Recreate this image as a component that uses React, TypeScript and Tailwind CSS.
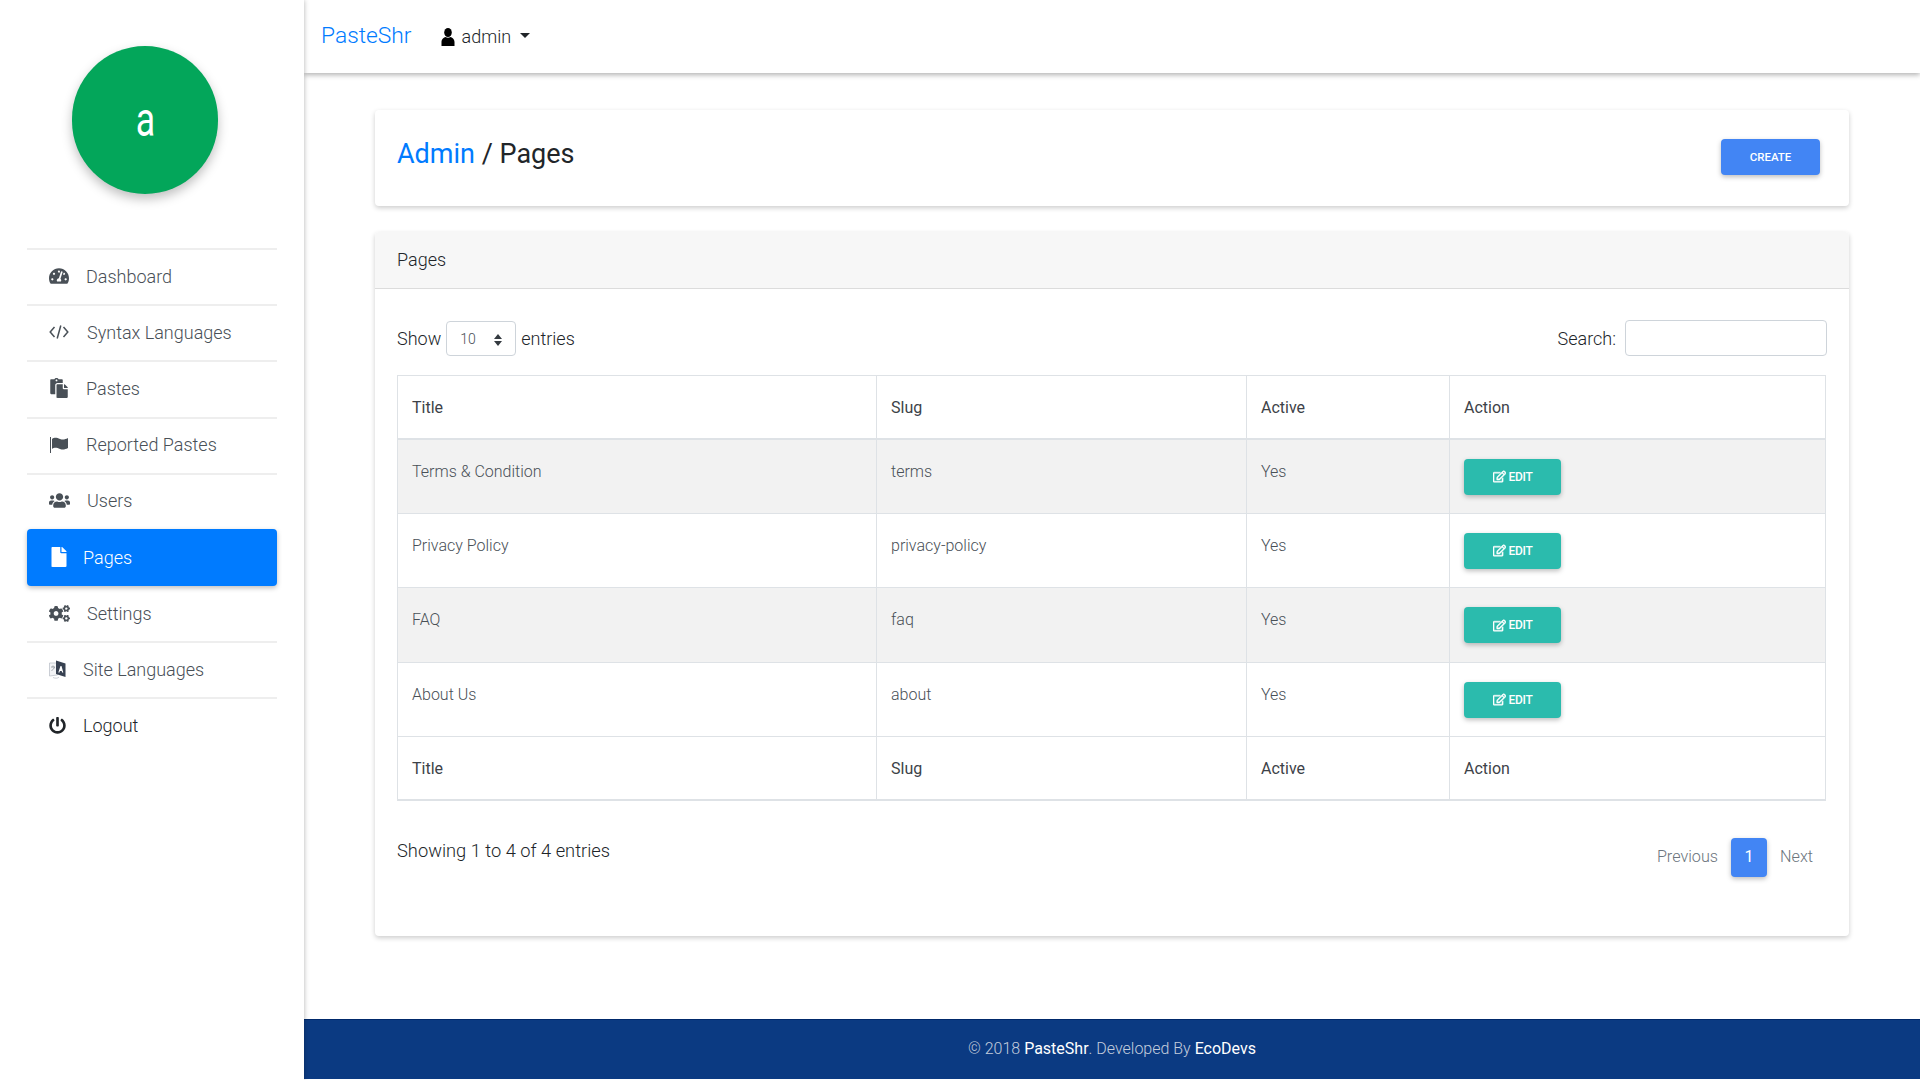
import { FaTachometerAlt, FaPaste, FaUsers, FaFile, FaCogs, FaPowerOff, FaUser, FaRegEdit } from "react-icons/fa";

function CodeIcon() {
  return (
    <svg width="20" height="16" viewBox="0 0 20 16" fill="none" stroke="#495057" strokeWidth="1.5">
      <path d="M5.5 3L1.2 8l4.3 5M14.5 3l4.3 5-4.3 5M11.8 1.5L8.2 14.5" />
    </svg>
  );
}

function FlagIcon() {
  return (
    <svg width="20" height="16" viewBox="0 0 20 16">
      <path d="M1 0h1v16H1z" fill="#495057" />
      <path d="M3 2c3-2 5-1 8 0s5 .5 8-1v10c-3 1.5-5 2-8 1s-5-2-8 0z" fill="#495057" />
    </svg>
  );
}

const nav = [
  { label: "Dashboard", icon: <FaTachometerAlt className="text-[20px]" />, gap: "w-[37px]" },
  { label: "Syntax Languages", icon: <CodeIcon />, gap: "w-[38px]" },
  { label: "Pastes", icon: <FaPaste className="text-[20px]" />, gap: "w-[37px]" },
  { label: "Reported Pastes", icon: <FlagIcon />, gap: "w-[37px]" },
  { label: "Users", icon: <FaUsers className="text-[21px]" />, gap: "w-[38px]" },
];
const rows = [
  ["Terms & Condition", "terms"],
  ["Privacy Policy", "privacy-policy"],
  ["FAQ", "faq"],
  ["About Us", "about"],
];

function LangIcon() {
  return (
    <svg width="17" height="19" viewBox="0 0 17 19">
      <path d="M0.5 3h8v12l-8 1z" fill="#f3f4f6" stroke="#b6bcc4" strokeWidth="0.7" />
      <path d="M7 0.5l9.5 3V17L7 14z" fill="#374151" />
      <path d="M11.5 6l-2.2 6.5h1.2l.4-1.4h1.8l.4 1.4h1.2L12.5 6z" fill="#fff" />
      <path d="M2 7h4M4 5.5V7M2.5 10.5c1.5-.7 2.5-1.7 3-3.5" stroke="#8b929a" strokeWidth="0.8" fill="none" />
      <path d="M4 17.5c2 1 5 1 6-.5" stroke="#b6bcc4" strokeWidth="0.7" fill="none" />
    </svg>
  );
}

function Row({ label, icon, w }: { label: string; icon: React.ReactNode; w: string }) {
  return (
    <div className="flex h-[56.2px] items-center border-t-2 border-[#eeeeee] pb-[2px] pl-[22px] text-[18px] font-light text-[#495057]">
      <span className={`flex shrink-0 items-center ${w}`}>{icon}</span>
      <span>{label}</span>
    </div>
  );
}

function HeadCells() {
  return (
    <tr className="h-[63px] border-b-2 border-[#dee2e6] text-[16px] text-[#3d4248]">
      <td className="w-[479px] border-x border-[#dee2e6] px-[14px] pt-[2px]">Title</td>
      <td className="w-[370px] border-x border-[#dee2e6] px-[14px] pt-[2px]">Slug</td>
      <td className="w-[203px] border-x border-[#dee2e6] px-[14px] pt-[2px]">Active</td>
      <td className="border-x border-[#dee2e6] px-[14px] pt-[2px]">Action</td>
    </tr>
  );
}

export default function App() {
  return (
    <div className="flex h-[1080px] w-[1920px] overflow-hidden bg-white font-['Roboto',sans-serif] text-[#212529]">
      <aside className="z-20 h-full w-[304px] shrink-0 bg-white px-[27px] shadow-[0_0_5px_rgba(0,0,0,0.3)]">
        <div className="flex justify-center pt-[46px] pr-[14px]">
          <div className="flex h-[148px] w-[146px] items-center justify-center rounded-full bg-[#03a65a] pb-[2px] text-[42px] font-normal text-white shadow-[0_5px_11px_rgba(0,0,0,0.25)]">
            <span className="inline-block scale-x-[0.85] scale-y-[1.15]">a</span>
          </div>
        </div>
        <nav className="mt-[54px]">
          {nav.map((n) => (
            <Row key={n.label} label={n.label} icon={n.icon} w={n.gap} />
          ))}
          <div className="flex h-[57px] items-center rounded bg-[#007bff] pl-[22px] text-[18px] font-light text-white shadow-[0_2px_5px_rgba(0,0,0,0.26)]">
            <span className="flex w-[34px] shrink-0 items-center">
              <FaFile className="text-[20px]" />
            </span>
            <span>Pages</span>
          </div>
          <div className="flex h-[55px] items-center pl-[22px] text-[18px] font-light text-[#495057]">
            <span className="flex w-[38px] shrink-0 items-center">
              <FaCogs className="text-[21px]" />
            </span>
            <span>Settings</span>
          </div>
          <Row label="Site Languages" icon={<LangIcon />} w="w-[34px]" />
          <div className="flex h-[56.2px] items-center border-t-2 border-[#eeeeee] pb-[1px] pl-[22px] text-[18px] font-light text-[#212529]">
            <span className="flex w-[34px] shrink-0 items-center">
              <FaPowerOff className="text-[17px]" />
            </span>
            <span>Logout</span>
          </div>
        </nav>
      </aside>

      <div className="flex h-full min-w-0 flex-1 flex-col">
        <header className="z-10 flex h-[73px] shrink-0 items-center bg-white pl-[17px] shadow-[0_2px_5px_rgba(0,0,0,0.3)]">
          <span className="text-[22.8px] font-light leading-none text-[#007bff]">PasteShr</span>
          <span className="ml-[29px] flex items-center text-[18px] font-light text-[#212529]">
            <svg width="14" height="18" viewBox="0 0 14 18" className="mr-[7px]">
              <ellipse cx="7" cy="4.5" rx="3.8" ry="4.5" fill="#000" />
              <path d="M0.5 18v-4c0-3 2.5-4.5 4-5 1.5 1 3.5 1 5 0 1.5.5 4 2 4 5v4z" fill="#000" />
            </svg>
            admin
            <span className="mb-[2px] ml-[9px] h-0 w-0 border-x-[5px] border-t-[5px] border-x-transparent border-t-[#212529]" />
          </span>
        </header>

        <main className="flex-1 px-[71px] pt-[37px]">
          <section className="flex h-[96px] items-start justify-between rounded bg-white pr-[29px] pl-[22px] shadow-[0_2px_5px_rgba(0,0,0,0.2)]">
            <h1 className="mt-[26px] text-[27px] font-normal leading-[36px]">
              <span className="text-[#007bff]">Admin</span> / Pages
            </h1>
            <button className="mt-[29px] h-[36px] w-[99px] rounded-sm bg-[#4285f4] pt-[1px] text-[11.5px] font-medium text-white uppercase shadow-[0_2px_5px_rgba(0,0,0,0.26)]">
              Create
            </button>
          </section>

          <section className="mt-[26px] h-[704px] rounded bg-white shadow-[0_2px_5px_rgba(0,0,0,0.2)]">
            <div className="flex h-[57px] items-center rounded-t border-b border-[#dcdcdc] bg-[#f7f7f7] px-[22px] pb-[2px] text-[18px] font-light">
              <span>Pages</span>
            </div>
            <div className="px-[22px]">
              <div className="flex h-[86px] items-end justify-between pb-[19px] text-[18px] font-light">
                <div className="flex items-center">
                  <span>Show</span>
                  <span className="mx-[5px] flex h-[35px] w-[70px] items-center justify-between rounded border border-[#ced4da] pt-[2px] pr-[13px] pl-[13px] text-[14px] text-[#495057]">
                    10
                    <svg width="8" height="12" viewBox="0 0 8 12">
                      <path d="M4 0l4 5H0zM4 12L0 7h8z" fill="#343a40" />
                    </svg>
                  </span>
                  <span>entries</span>
                </div>
                <div className="flex items-center">
                  <span>Search:</span>
                  <input className="ml-[9px] h-[36px] w-[202px] rounded border border-[#ced4da] bg-white" />
                </div>
              </div>
              <table className="w-[1429px] table-fixed border-collapse border border-[#dee2e6]">
                <tbody>
                  <HeadCells />
                  {rows.map((r, i) => (
                    <tr
                      key={r[0]}
                      className={`h-[74.5px] border-b border-[#dee2e6] align-top text-[16px] font-light text-[#495057] ${i % 2 === 0 ? "bg-[#f2f2f2]" : "bg-white"}`}
                    >
                      <td className="border-x border-[#dee2e6] px-[14px] pt-[20px]">{r[0]}</td>
                      <td className="border-x border-[#dee2e6] px-[14px] pt-[20px]">{r[1]}</td>
                      <td className="border-x border-[#dee2e6] px-[14px] pt-[20px]">Yes</td>
                      <td className="border-x border-[#dee2e6] px-[14px] pt-[19px]">
                        <button className="flex h-[36px] w-[97px] items-center justify-center rounded-sm bg-[#2bbbad] text-[12px] font-medium tracking-[-0.3px] text-white uppercase shadow-[0_2px_5px_rgba(0,0,0,0.26)]">
                          <FaRegEdit className="mr-[3px] stroke-[20] text-[13px]" />
                          Edit
                        </button>
                      </td>
                    </tr>
                  ))}
                  <HeadCells />
                </tbody>
              </table>
              <div className="flex items-start justify-between">
                <span className="mt-[36px] text-[18.3px] font-light">Showing 1 to 4 of 4 entries</span>
                <div className="mt-[37px] mr-[1px] flex items-center text-[16.2px] font-light text-[#6c757d]">
                  <span className="mr-[13px]">Previous</span>
                  <span className="flex h-[39px] w-[36px] items-center justify-center rounded-sm bg-[#4285f4] font-normal text-white shadow-[0_2px_5px_rgba(0,0,0,0.26)]">
                    1
                  </span>
                  <span className="mr-[13px] ml-[13px]">Next</span>
                </div>
              </div>
            </div>
          </section>
        </main>

        <footer className="mb-[1px] flex h-[60px] shrink-0 items-center justify-center border-t border-[#00296b] bg-[#0b3a82] pb-[2px] text-[16px] font-light text-[#c3cddd]">
          <span>
            © 2018 <span className="font-normal text-white">PasteShr</span>. Developed By{" "}
            <span className="font-normal text-white">EcoDevs</span>
          </span>
        </footer>
      </div>
    </div>
  );
}
